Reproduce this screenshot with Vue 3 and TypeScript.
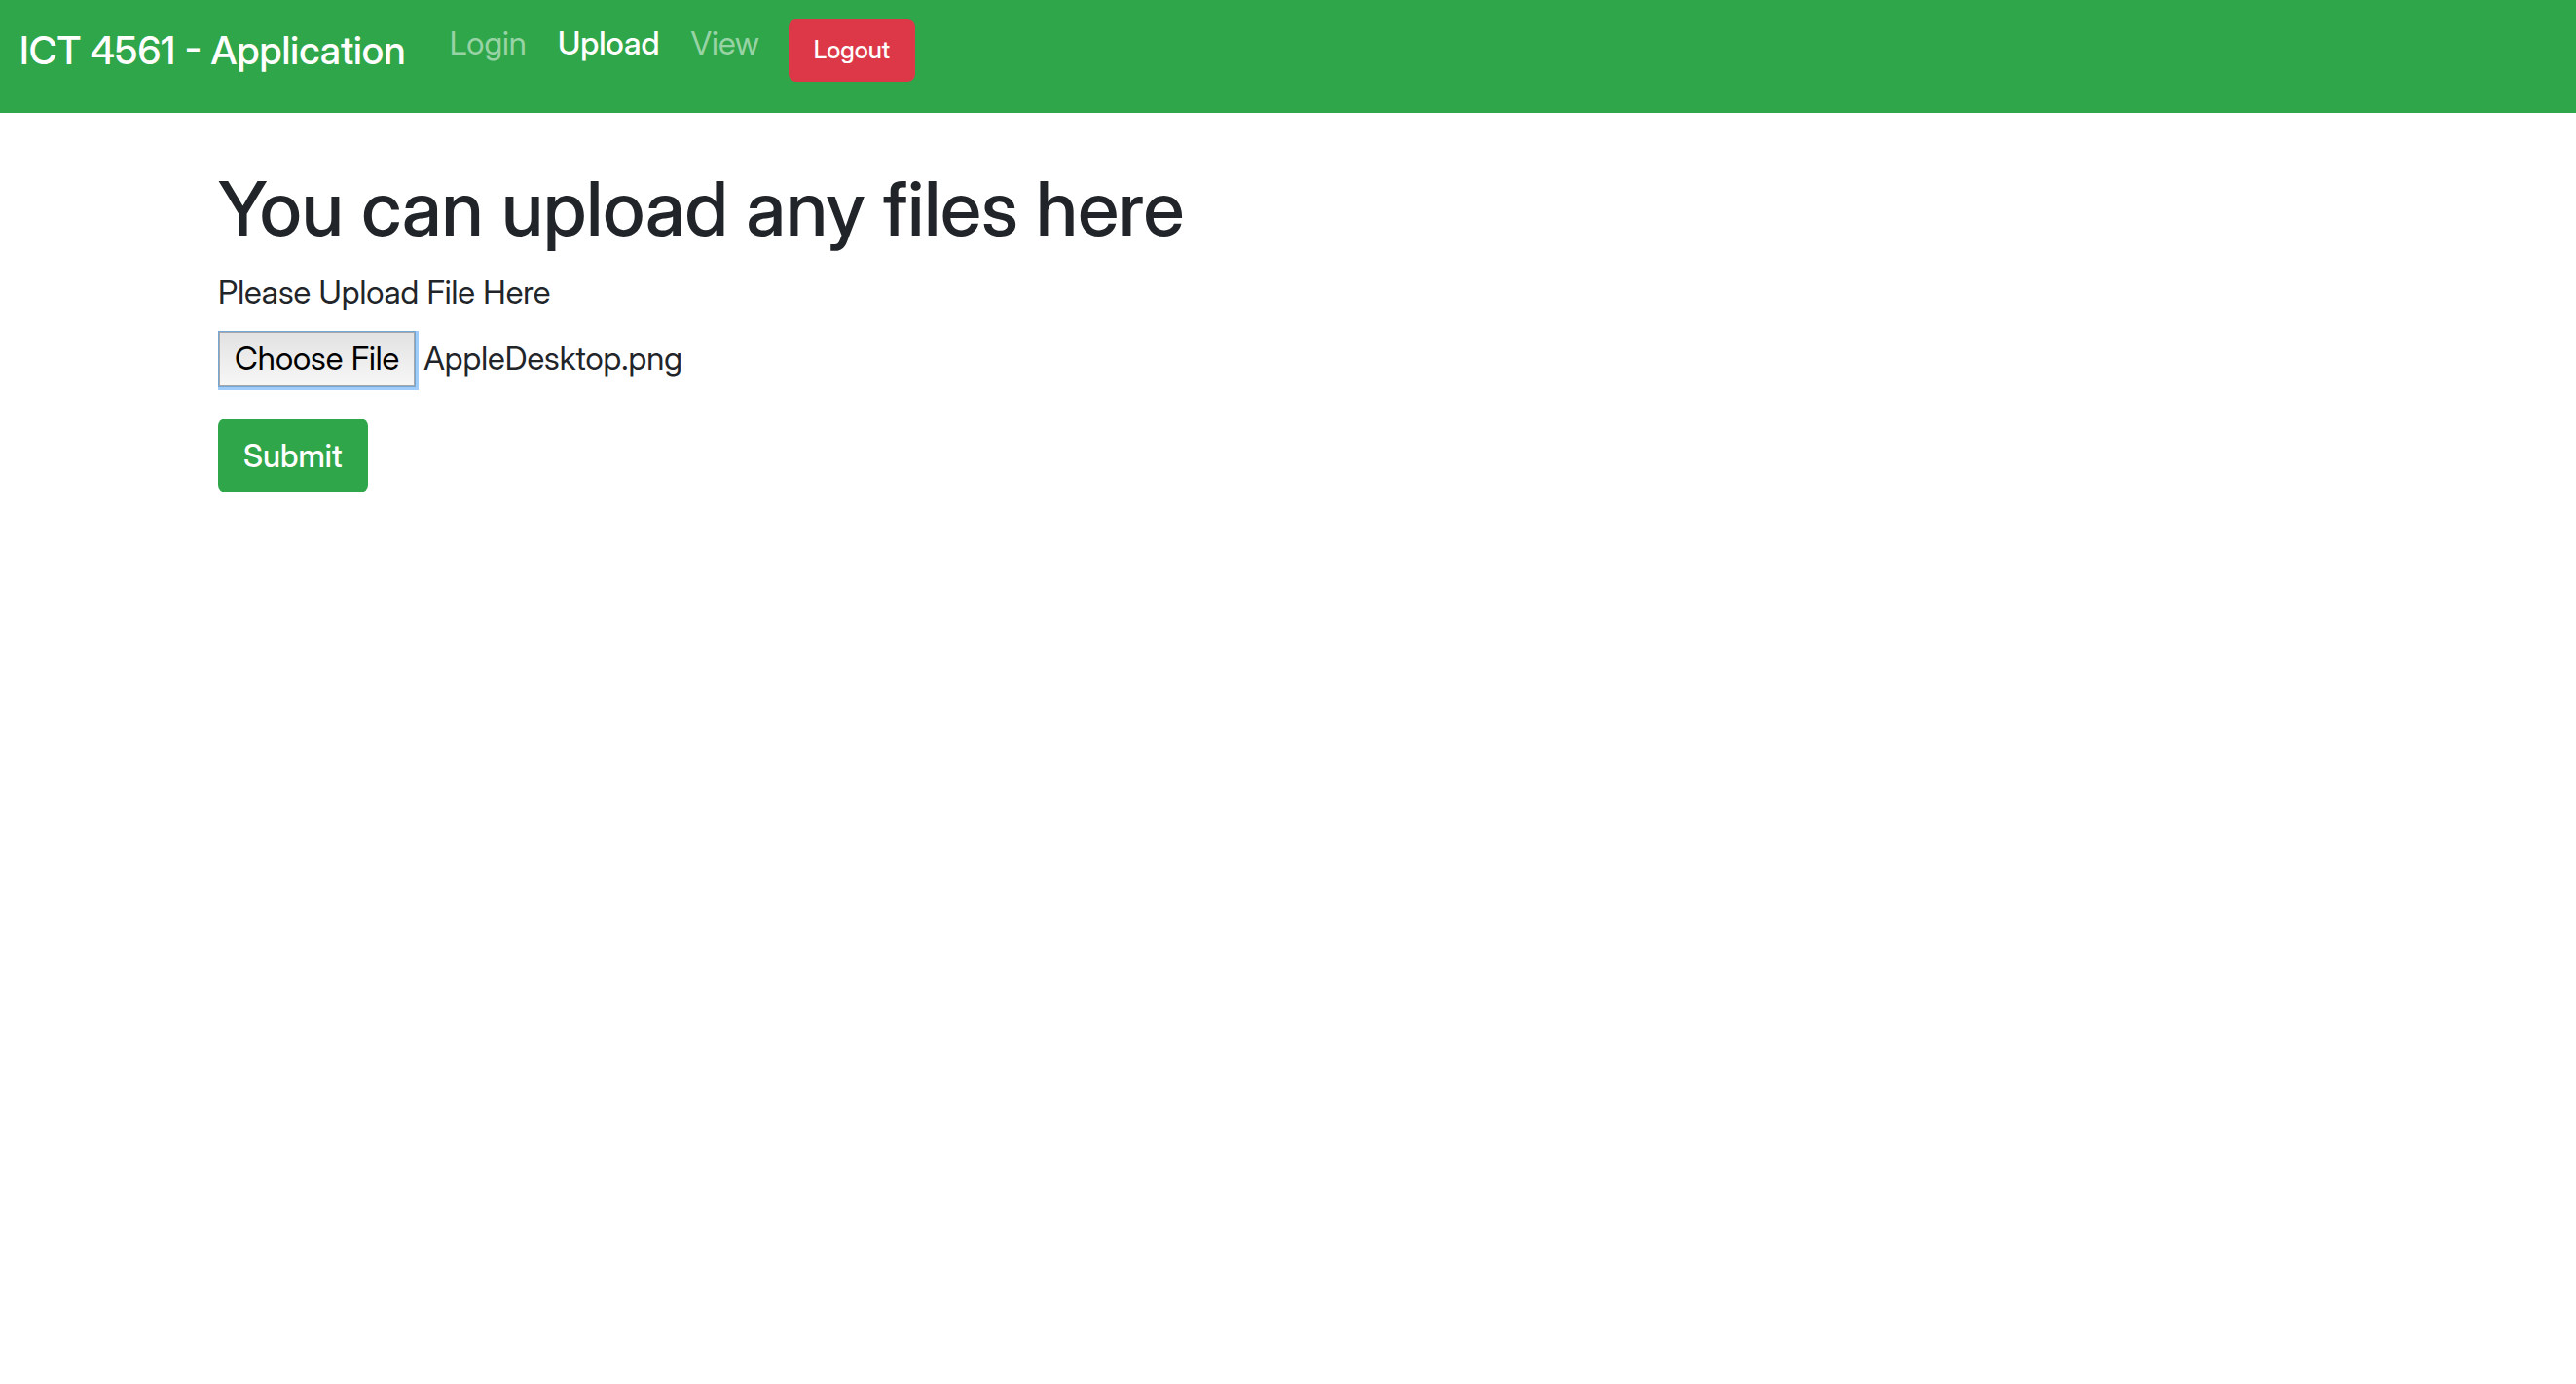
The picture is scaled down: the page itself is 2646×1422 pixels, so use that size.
<script setup lang="ts">
import { onMounted, ref } from 'vue'

interface NavItem {
  label: string
  active: boolean
}

const navItems: NavItem[] = [
  { label: 'Login', active: false },
  { label: 'Upload', active: true },
  { label: 'View', active: false },
]

const fileInput = ref<HTMLInputElement | null>(null)

onMounted(() => {
  const transfer = new DataTransfer()
  transfer.items.add(new File([''], 'AppleDesktop.png', { type: 'image/png' }))
  if (fileInput.value) fileInput.value.files = transfer.files
})
</script>

<template>
  <div class="page">
    <nav class="navbar">
      <a class="brand" href="#">ICT 4561 - Application</a>
      <ul class="nav-list">
        <li v-for="item in navItems" :key="item.label">
          <a href="#" class="nav-link" :class="{ active: item.active }">{{ item.label }}</a>
        </li>
      </ul>
      <button type="button" class="btn btn-danger">Logout</button>
    </nav>
    <main class="container">
      <h1>You can upload any files here</h1>
      <form @submit.prevent>
        <label for="upload-file">Please Upload File Here</label>
        <input id="upload-file" ref="fileInput" class="file" type="file" />
        <button type="submit" class="btn btn-success">Submit</button>
      </form>
    </main>
  </div>
</template>

<style>
body {
  margin: 0;
  background: #fff;
}
</style>

<style scoped>
.page {
  font-family: "Inter Display", Inter, "Liberation Sans", sans-serif;
  font-size: 33px;
  line-height: 48px;
  color: #212529;
}

.navbar {
  display: flex;
  align-items: flex-start;
  box-sizing: border-box;
  min-height: 116px;
  padding: 20px;
  background: #30a64a;
}

.brand {
  margin-right: 29px;
  padding-top: 2px;
  font-size: 40px;
  font-weight: 500;
  line-height: 60px;
  color: #fff;
  text-decoration: none;
  white-space: nowrap;
}

.nav-list {
  display: flex;
  margin: 0;
  padding: 0;
  list-style: none;
}

.nav-link {
  display: block;
  padding: 0 16px;
  color: #98d3a5;
  text-decoration: none;
}

.nav-link.active {
  color: #fff;
  font-weight: 500;
}

.btn {
  display: block;
  box-sizing: border-box;
  border: 0;
  border-radius: 8px;
  font-family: inherit;
  font-weight: 500;
  color: #fff;
}

.btn-danger {
  height: 64px;
  margin-left: 14px;
  padding: 0 26px 2px;
  background: #dc3848;
  font-size: 25px;
}

.btn-success {
  height: 76px;
  margin-top: 26px;
  padding: 0 26px;
  background: #30a64a;
  font-size: 32px;
}

.container {
  padding: 50px 224px;
}

h1 {
  margin: 0 0 14px;
  font-size: 77px;
  font-weight: 500;
  line-height: 96px;
}

label {
  display: block;
  margin-bottom: 16px;
}

/* The focus ring is cut off at the input's top and left edges. */
.file {
  display: block;
  width: 100%;
  height: 64px;
  clip-path: inset(0);
  font: inherit;
  color: #212529;
}

.file::file-selector-button {
  box-sizing: border-box;
  height: 58px;
  margin: 0 8px 0 0;
  padding: 0 16px 2px;
  border: 1px solid #74a6d6;
  border-radius: 0;
  background: linear-gradient(#e2e2e2, #f7f7f7);
  box-shadow: inset 0 0 0 1px #a8a8a8, 0 0 0 3px #a0ccfa;
  font: inherit;
  color: #000;
}
</style>
